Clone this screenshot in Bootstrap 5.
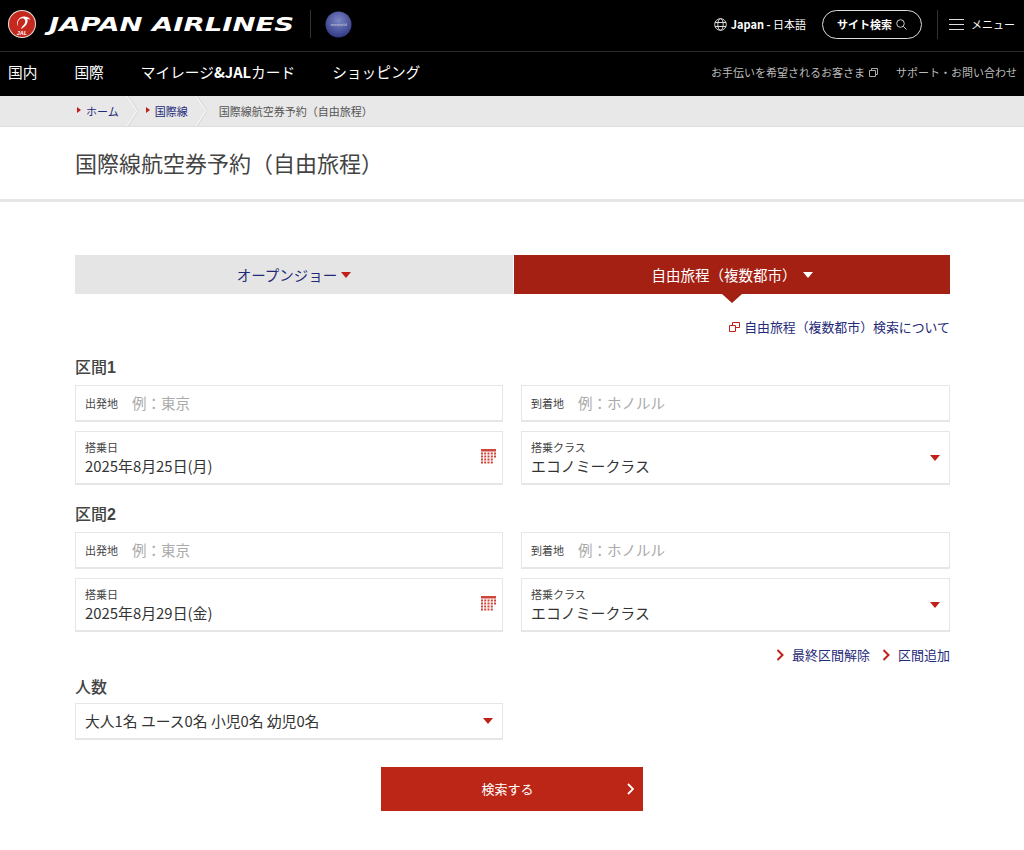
<!DOCTYPE html>
<html lang="ja">

<head>
    <meta charset="UTF-8">
    <meta name="viewport" content="width=device-width, initial-scale=1">
    <title>国際線航空券予約（自由旅程）</title>

    <!-- Bootstrap CSS -->
    <link href="https://cdn.jsdelivr.net/npm/bootstrap@5.3.2/dist/css/bootstrap.min.css" rel="stylesheet">

    <style>
        body {
            font-family: "Noto Sans CJK JP", "Liberation Sans", sans-serif;
            color: #333;
            background: #fff;
        }

        a { text-decoration: none; }

        .top-head { background: #000; height: 52px; border-bottom: 1px solid #2b2b2b; padding: 0 9px 3px 8px; }
        .brand-name { margin-left: 7px; margin-top: -1px; }
        .brand-name text {
            font-family: "DejaVu Sans", sans-serif;
            font-weight: 700;
            font-style: italic;
            font-size: 19.500px;
            fill: #fff;
        }
        .brand-sep { width: 1px; height: 28px; background: #333; margin: 0 14px 0 15px; }
        .lang-text { color: #fff; font-size: 11px; font-weight: 700; }
        .lang-text span { font-weight: 400; }
        .search-pill {
            width: 100px; height: 29px; border: 1px solid #ddd; border-radius: 15px;
            color: #fff; font-size: 11px; font-weight: 700; margin: 0 15px 0 16px;
        }
        .menu-link { color: #fff; font-size: 11px; border-left: 1px solid #333; height: 29px; padding-left: 11px; gap: 7px; }
        .main-nav { background: #000; height: 44px; padding: 0 7px 4px 8px; }
        .main-nav .nav-main-link { color: #fff; font-size: 14.7px; margin-right: 37px; }
        .main-nav .nav-main-link b { font-weight: 700; }
        .sub-link { color: #bbb; font-size: 11px; }
        .sub-gap { gap: 18px; }

        .crumb-bar { background: #e8e8e8; height: 31px; padding-left: 77px; font-size: 11px; border-bottom: 1px solid #ddd; }
        .crumb-link { color: #1f2a78; display: flex; align-items: center; }
        .crumb-link::before {
            content: ""; border-left: 4px solid #c0201a; border-top: 3px solid transparent;
            border-bottom: 3px solid transparent; margin-right: 5px; margin-top: -3px;
        }
        .crumb-sep { margin: 0 8px 0 7px; }
        .crumb-cur { color: #555; margin-left: 4px; }
        .title-band { height: 75px; border-bottom: 3px solid #e6e6e6; padding: 0 0 1px 75px; }
        .title-band h1 { font-size: 22px; font-weight: 400; color: #444; margin: 0; }

        .page-wrap { padding: 53px 74px 0 75px; }
        .tab-row { gap: 1px; }
        .trip-tab { height: 39px; font-size: 14.5px; }
        .tab-off { background: #e5e5e5; color: #1f2a78; width: 438px; }
        .tab-on { background: #a32013; color: #fff; width: 436px; position: relative; gap: 6px; }
        .tab-on::after {
            content: ""; position: absolute; left: 50%; top: 100%; margin-left: -10px;
            border-top: 9px solid #a32013; border-left: 10px solid transparent; border-right: 10px solid transparent;
        }
        .tri-down { display: inline-block; border-top: 6px solid #c0201a; border-left: 5.5px solid transparent; border-right: 5.5px solid transparent; }
        .tab-on .tri-down { border-top-color: #fff; }
        .about-link { color: #1f2a78; font-size: 12.900px; margin-top: 24px; height: 18px; }
        .leg-title { font-size: 16px; font-weight: 500; color: #444; line-height: 24px; margin: 0 0 5px; }
        .leg-title b { font-weight: 700; font-family: "Liberation Sans", sans-serif; }
        .leg-first { margin-top: 18px; }
        .leg-next { margin-top: 16px; }
        .leg-people { margin-top: 10px; }
        .field-grid { display: grid; grid-template-columns: 428px 429px; column-gap: 18px; row-gap: 9px; }
        .field-box { border: 2px solid #e6e6e6; border-width: 1px 1px 2px 1px; background: #fff; padding: 0 9px; position: relative; }
        .field-short { height: 37px; }
        .field-tall { height: 54px; }
        .field-people { height: 37px; width: 428px; font-size: 14.8px; color: #333; }
        .field-label { font-size: 11px; color: #444; white-space: nowrap; }
        .field-input {
            border: 0; padding: 0; margin-left: 14px; font-size: 14.500px; flex: 1; min-width: 0; outline: none; background: transparent;
            font-family: inherit;
        }
        .field-input::placeholder { color: #aaa; opacity: 1; }
        .field-value { font-size: 14.900px; color: #333; line-height: 21px; }
        .field-tall .field-label { line-height: 15px; }
        .cal-icon { margin-right: -3px; margin-top: -2px; }
        .action-link { color: #1f2a78; font-size: 13px; }
        .action-row { height: 18px; margin-top: 14px; gap: 12px; }
        .submit-wrap { margin-top: 27px; }
        .submit-btn {
            width: 262px; height: 44px; background: #bb2617; color: #fff; font-size: 13px; border-radius: 0; border: 0;
            position: relative; margin-left: -1px; padding-right: 21px;
        }
        .submit-btn:hover { background: #a32013; color: #fff; }
        .submit-btn svg { position: absolute; right: 9px; top: 16px; }
    </style>
</head>

<body>

    <!-- Header -->
    <header>
        <div class="top-head d-flex align-items-center">
            <svg width="28" height="28" viewBox="0 0 28 28">
                <circle cx="14" cy="14" r="14" fill="#e4e4e4"/>
                <circle cx="14" cy="14" r="13" fill="#c5281c"/>
                <path d="M9.500 16.500C7.500 11 11.500 6.500 16 6.500c3 0 5 1.200 6.500 3l-3.200-.6c1 3-.5 6-3 7.800l-3.300 2.500c.4-2 2-3.300 3-4.700 1.300-1.800 1.600-3.500.8-4.800-1-1.500-3.200-1.700-4.800-.8-2 1.200-2.600 4-2.500 8.100z" fill="#fff"/>
                <text x="14" y="25" text-anchor="middle" font-size="5.500" font-weight="700" font-style="italic" font-family="Liberation Sans" fill="#fff">JAL</text>
            </svg>
            <svg class="brand-name" width="252" height="26" viewBox="0 0 252 26">
                <text x="6" y="20" textLength="245" lengthAdjust="spacingAndGlyphs">JAPAN AIRLINES</text>
            </svg>
            <span class="brand-sep"></span>
            <svg width="27" height="27" viewBox="0 0 27 27">
                <defs>
                    <radialGradient id="globeFill" cx="50%" cy="35%" r="70%">
                        <stop offset="0" stop-color="#7b86c4"/>
                        <stop offset="1" stop-color="#2b3380"/>
                    </radialGradient>
                </defs>
                <circle cx="13.500" cy="13.500" r="13" fill="url(#globeFill)"/>
                <text x="13.500" y="15" text-anchor="middle" font-size="4" font-family="Liberation Sans" fill="#ccd">oneworld</text>
            </svg>

            <div class="ms-auto d-flex align-items-center">
                <svg class="me-1" width="13" height="13" viewBox="0 0 13 13" fill="none" stroke="#ddd">
                    <circle cx="6.500" cy="6.500" r="5.800"/>
                    <ellipse cx="6.500" cy="6.500" rx="2.700" ry="5.800"/>
                    <path d="M1 4.500h11M1 8.500h11"/>
                </svg>
                <span class="lang-text">Japan - <span>日本語</span></span>
                <a href="#" class="search-pill d-flex align-items-center justify-content-center gap-1">
                    サイト検索
                    <svg width="11" height="11" viewBox="0 0 11 11" fill="none" stroke="#ccc">
                        <circle cx="4.500" cy="4.500" r="3.800"/>
                        <path d="M7.200 7.200 10.500 10.500"/>
                    </svg>
                </a>
                <a href="#" class="menu-link d-flex align-items-center">
                    <svg width="15" height="11" viewBox="0 0 15 11" stroke="#ddd">
                        <path d="M0 .5h15M0 5.500h15M0 10.500h15"/>
                    </svg>
                    メニュー
                </a>
            </div>
        </div>

        <nav class="main-nav d-flex align-items-center">
            <a href="#" class="nav-main-link">国内</a>
            <a href="#" class="nav-main-link">国際</a>
            <a href="#" class="nav-main-link">マイレージ<b>&amp;JAL</b>カード</a>
            <a href="#" class="nav-main-link">ショッピング</a>
            <div class="ms-auto d-flex align-items-center sub-gap">
                <a href="#" class="sub-link d-flex align-items-center gap-1">
                    お手伝いを希望されるお客さま
                    <svg width="9" height="9" viewBox="0 0 9 9" fill="none" stroke="#aaa">
                        <path d="M.5 2.500h6v6h-6zM2.500 2.500v-2h6v6h-2"/>
                    </svg>
                </a>
                <a href="#" class="sub-link">サポート・お問い合わせ</a>
            </div>
        </nav>
    </header>

    <!-- Breadcrumb -->
    <div class="crumb-bar d-flex align-items-center">
        <a href="#" class="crumb-link">ホーム</a>
        <svg class="crumb-sep" width="12" height="30" viewBox="0 0 12 30" fill="none" stroke-width="1.200">
            <path d="M2 0 12 15 2 30" stroke="#d2d2d2"/>
            <path d="M1 0 11 15 1 30" stroke="#f6f6f6"/>
        </svg>
        <a href="#" class="crumb-link">国際線</a>
        <svg class="crumb-sep" width="12" height="30" viewBox="0 0 12 30" fill="none" stroke-width="1.200">
            <path d="M2 0 12 15 2 30" stroke="#d2d2d2"/>
            <path d="M1 0 11 15 1 30" stroke="#f6f6f6"/>
        </svg>
        <span class="crumb-cur">国際線航空券予約（自由旅程）</span>
    </div>

    <div class="title-band d-flex align-items-center">
        <h1>国際線航空券予約（自由旅程）</h1>
    </div>

    <main class="page-wrap">
        <!-- Tabs -->
        <div class="tab-row d-flex">
            <a href="#" class="trip-tab tab-off d-flex align-items-center justify-content-center gap-1">オープンジョー <span class="tri-down"></span></a>
            <a href="#" class="trip-tab tab-on d-flex align-items-center justify-content-center">自由旅程（複数都市） <span class="tri-down"></span></a>
        </div>

        <div class="about-link d-flex align-items-center justify-content-end">
            <svg class="me-1" width="11" height="10" viewBox="0 0 11 10" fill="none" stroke="#c0201a">
                <path d="M.5 3.500h6v6h-6zM3.500 3.500v-3h7v5h-4"/>
            </svg>
            <a href="#" class="text-reset">自由旅程（複数都市）検索について</a>
        </div>

        <!-- Leg 1 -->
        <h2 class="leg-title leg-first">区間<b>1</b></h2>
        <div class="field-grid">
            <div class="field-box field-short d-flex align-items-center">
                <label class="field-label">出発地</label>
                <input class="field-input" type="text" placeholder="例：東京">
            </div>
            <div class="field-box field-short d-flex align-items-center">
                <label class="field-label">到着地</label>
                <input class="field-input" type="text" placeholder="例：ホノルル">
            </div>
            <div class="field-box field-tall d-flex align-items-center justify-content-between">
                <div>
                    <div class="field-label">搭乗日</div>
                    <div class="field-value">2025年8月25日(月)</div>
                </div>
                <svg class="cal-icon" width="15" height="15" viewBox="0 0 15 15" fill="#d0453a">
                    <rect width="15" height="2.500"/>
                    <path d="M0 3.500h2v2H0zM3.200 3.500h2v2h-2zM6.500 3.500h2v2h-2zM9.800 3.500h2v2h-2zM13 3.500h2v2h-2zM0 6.500h2v2H0zM3.200 6.500h2v2h-2zM6.500 6.500h2v2h-2zM9.800 6.500h2v2h-2zM13 6.500h2v2h-2zM0 9.500h2v2H0zM3.200 9.500h2v2h-2zM6.500 9.500h2v2h-2zM9.800 9.500h2v2h-2zM0 12.500h2v2H0zM3.200 12.500h2v2h-2zM6.500 12.500h2v2h-2zM9.800 12.500h2v2h-2z"/>
                </svg>
            </div>
            <div class="field-box field-tall d-flex align-items-center justify-content-between">
                <div>
                    <div class="field-label">搭乗クラス</div>
                    <div class="field-value">エコノミークラス</div>
                </div>
                <span class="tri-down"></span>
            </div>
        </div>

        <!-- Leg 2 -->
        <h2 class="leg-title leg-next">区間<b>2</b></h2>
        <div class="field-grid">
            <div class="field-box field-short d-flex align-items-center">
                <label class="field-label">出発地</label>
                <input class="field-input" type="text" placeholder="例：東京">
            </div>
            <div class="field-box field-short d-flex align-items-center">
                <label class="field-label">到着地</label>
                <input class="field-input" type="text" placeholder="例：ホノルル">
            </div>
            <div class="field-box field-tall d-flex align-items-center justify-content-between">
                <div>
                    <div class="field-label">搭乗日</div>
                    <div class="field-value">2025年8月29日(金)</div>
                </div>
                <svg class="cal-icon" width="15" height="15" viewBox="0 0 15 15" fill="#d0453a">
                    <rect width="15" height="2.500"/>
                    <path d="M0 3.500h2v2H0zM3.200 3.500h2v2h-2zM6.500 3.500h2v2h-2zM9.800 3.500h2v2h-2zM13 3.500h2v2h-2zM0 6.500h2v2H0zM3.200 6.500h2v2h-2zM6.500 6.500h2v2h-2zM9.800 6.500h2v2h-2zM13 6.500h2v2h-2zM0 9.500h2v2H0zM3.200 9.500h2v2h-2zM6.500 9.500h2v2h-2zM9.800 9.500h2v2h-2zM0 12.500h2v2H0zM3.200 12.500h2v2h-2zM6.500 12.500h2v2h-2zM9.800 12.500h2v2h-2z"/>
                </svg>
            </div>
            <div class="field-box field-tall d-flex align-items-center justify-content-between">
                <div>
                    <div class="field-label">搭乗クラス</div>
                    <div class="field-value">エコノミークラス</div>
                </div>
                <span class="tri-down"></span>
            </div>
        </div>

        <div class="action-row d-flex align-items-center justify-content-end">
            <a href="#" class="action-link d-flex align-items-center gap-2">
                <svg width="8" height="12" viewBox="0 0 8 12" fill="none" stroke="#c0201a" stroke-width="2"><path d="M1.500 1 6.500 6 1.500 11"/></svg>
                最終区間解除
            </a>
            <a href="#" class="action-link d-flex align-items-center gap-2">
                <svg width="8" height="12" viewBox="0 0 8 12" fill="none" stroke="#c0201a" stroke-width="2"><path d="M1.500 1 6.500 6 1.500 11"/></svg>
                区間追加
            </a>
        </div>

        <!-- Passengers -->
        <h2 class="leg-title leg-people">人数</h2>
        <div class="field-box field-people d-flex align-items-center justify-content-between">
            <span>大人1名 ユース0名 小児0名 幼児0名</span>
            <span class="tri-down"></span>
        </div>

        <div class="d-flex justify-content-center submit-wrap">
            <button type="button" class="btn submit-btn">
                検索する
                <svg width="7" height="12" viewBox="0 0 7 12" fill="none" stroke="#fff" stroke-width="1.800"><path d="M1 1 6 6 1 11"/></svg>
            </button>
        </div>
    </main>

    <!-- Bootstrap JS -->
    <script src="https://cdn.jsdelivr.net/npm/bootstrap@5.3.2/dist/js/bootstrap.bundle.min.js"></script>
</body>

</html>
